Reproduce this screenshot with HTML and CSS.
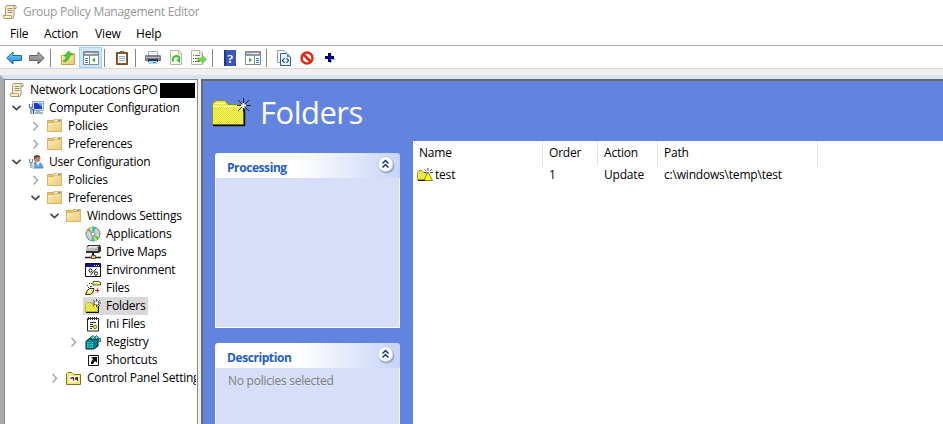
FILE: index.html
```html
<!DOCTYPE html>
<html lang="en">
<head>
<meta charset="utf-8">
<title>Group Policy Management Editor</title>
<link rel="stylesheet" href="styles.css">
</head>
<body>
<svg class="defs" width="0" height="0" aria-hidden="true">
<defs>
<linearGradient id="gf" x1="0" y1="0" x2="1" y2="1"><stop offset="0" stop-color="#ffedb5"/><stop offset="1" stop-color="#ecc873"/></linearGradient>
<linearGradient id="gb" x1="0" y1="0" x2="0" y2="1"><stop offset="0" stop-color="#79d0ff"/><stop offset="1" stop-color="#158ae0"/></linearGradient>
<linearGradient id="gg" x1="0" y1="0" x2="0" y2="1"><stop offset="0" stop-color="#bbb"/><stop offset="1" stop-color="#777"/></linearGradient>
<pattern id="dither" width="2" height="2" patternUnits="userSpaceOnUse"><rect width="2" height="2" fill="#ffff2e"/><rect width="1" height="1" fill="#d6d66c"/><rect x="1" y="1" width="1" height="1" fill="#d6d66c"/></pattern>
<symbol id="scroll" viewBox="0 0 16 16"><path d="M4.500 1.500H13Q15 2 14 4.500H12V12Q12 14.500 10 14.500H2Q.5 13.500 1.500 11.500H3.500V3.500Q3.500 2 4.500 1.500Z" fill="#f7efcf" stroke="#a49467"/><path d="M12 4.500V2M3.500 11.500H9.500V14" fill="none" stroke="#b9a878"/><path d="M5.500 4.500h5M5.500 6.500h5M5.500 8.500h5" stroke="#998e6e"/></symbol>
<symbol id="folder" viewBox="0 0 16 16"><path d="M.5 2.500H6L7.500 1.500H14.500V13.500H.5Z" fill="#e7c16b" stroke="#d3ab55"/><path d="M8 2.500h5" stroke="#fff" stroke-width="1.500"/><path d="M11 2.500h2" stroke="#2c91d8"/><path d="M.5 4.500H7L8 3.500H14.500V13.500H.5Z" fill="url(#gf)" stroke="#dcb661"/></symbol>
<symbol id="computer" viewBox="0 0 16 16"><path d="M4.500 1.500H15.500V10.500H4.500Z" fill="#dce5ef" stroke="#9ba8b8"/><path d="M6 3H14V9H6Z" fill="#1739cf"/><path d="M9 3H14V7Z" fill="#69a8ff"/><path d="M8 11h4v1h3v2H7v-2h1Z" fill="#a6b3c0"/><path d="M1.500 4V7L3 8.500V14M4.500 4V7L3 8.500" fill="none" stroke="#607e92" stroke-width="1.300"/><path d="M5.500 9v5" stroke="#2864ae" stroke-width="1.500"/></symbol>
<symbol id="user" viewBox="0 0 16 16"><path d="M5 14V11Q6 8 9 8H11Q14 9 15 14Z" fill="#62a4dd" stroke="#4d87bd"/><path d="M8 8L10 12L12 8Z" fill="#fff"/><circle cx="9" cy="4.800" r="3.300" fill="#bc8862"/><path d="M6 5Q5 1 9 1Q12 1 12.500 4L10 3Z" fill="#5a4a40"/><path d="M1.500 5V8L3 9V14M4.500 5V8L3 9" fill="none" stroke="#718999" stroke-width="1.200"/><path d="M5.500 10v4" stroke="#d4e3ee" stroke-width="1.500"/></symbol>
<symbol id="disc" viewBox="0 0 16 16"><circle cx="8" cy="8" r="7" fill="#d0d0d0" stroke="#777"/><path d="M8 8L2 4Q4 1 7 1Z" fill="#9a9a9a"/><path d="M8 8L4 2 7 1Z" fill="#f5ec39"/><path d="M8 8L7 1Q10 1 11 2Z" fill="#18c9d8"/><path d="M8 8L14 12Q12 15 9 15Z" fill="#45d02d"/><path d="M8 8L9 15H6Z" fill="#12c9e8"/><path d="M8 8L12 14 10 15Z" fill="#f0e930"/><circle cx="8" cy="8" r="2" fill="#fff" stroke="#888"/></symbol>
<symbol id="drive" viewBox="0 0 16 16"><path d="M3 1H15L16 3V7L14 9H1V4Z" fill="#333"/><path d="M4 2H14L12 4H1Z" fill="#e4e4e4"/><path d="M1 4H13V7H1Z" fill="#bebebe"/><path d="M10 5h2v1h-2Z" fill="#27d52d"/><path d="M8 9V12" stroke="#222" stroke-width="2"/><path d="M0 13.500H16" stroke="#222" stroke-width="1.500"/><path d="M6.500 11.500h4v3h-4Z" fill="#e8d542" stroke="#555"/></symbol>
<symbol id="env" viewBox="0 0 16 16"><path d="M.5 1.500H15.500V14.500H.5Z" fill="#fff" stroke="#111"/><path d="M1 2H15V5H1Z" fill="#101096"/><path d="M9 3.500h1M11 3.500h1M13 3.500h1" stroke="#fff"/><path d="M5.500 13L11.500 6.500" stroke="#111"/><ellipse cx="5.500" cy="8.500" rx="1.500" ry="1.700" fill="none" stroke="#111"/><ellipse cx="11" cy="11.500" rx="1.500" ry="1.700" fill="none" stroke="#111"/></symbol>
<symbol id="files" viewBox="0 0 16 16"><path d="M8 1.500h6l1.500 1V5H8Z" fill="url(#dither)" stroke="#222" stroke-width=".7"/><path d="M9 2.500h4" stroke="#fff"/><path d="M4 3.500h1M6 3.500h1M2.500 5v1M3 7.500h1M5 6.500h2M7 8.500h1" stroke="#333"/><path d="M4.500 8.500H9L8 12.500 5.500 14.500H.5L2 11Z" fill="url(#dither)" stroke="#333"/><path d="M4 9.500h3M3 11.500h4" stroke="#fff"/><path d="M10 10.500h4M12.500 8.500v4" stroke="#e01919" stroke-width="1.200"/></symbol>
<symbol id="yfolder" viewBox="0 0 16 16"><path d="M.5 6.500L2 4.500H6L7.500 6.500H12.500V13.500H.5Z" fill="url(#dither)" stroke="#b5b51b"/><path d="M1 14.500H13.500V8" fill="none" stroke="#111"/><path d="M11.500 1v2.500M11.500 7v2M7.500 5h2.500M13 5h3M8 2l2 2M13 6l2 2M15 2l-2 2M10 6L8 8" fill="none" stroke="#222" stroke-width=".8"/><path d="M11 4h1v2h-1ZM10 5h3v1h-3Z" fill="#fff"/></symbol>
<symbol id="ini" viewBox="0 0 16 16"><path d="M2.500 2.500H13.500V15H2.500Z" fill="#fff" stroke="#222"/><path d="M3.500 1v3M5.500 1v3M7.500 1v3M9.500 1v3M11.500 1v3" stroke="#333"/><path d="M5 6.500h6M5 8.500h3M5 10.500h3M5 12.500h2" stroke="#333"/><circle cx="10" cy="11" r="1.800" fill="#ffed25" stroke="#777005"/></symbol>
<symbol id="registry" viewBox="0 0 16 16"><path d="M1 7.500L4 4.500 10 5.500 13 4V12L9 15H1Z" fill="#087d89" stroke="#022"/><path d="M2 8h6v6H2Z" fill="#23d9dd"/><path d="M4 7v7M6 7v7M1 9.500h8M1 12h8" stroke="#087d89" stroke-width=".8"/><path d="M5 3.500l3-2 2 2-2 2ZM11.500 1.500l2 2-2 2-2-2ZM13.500 4.500h2v3h-2Z" fill="#48d9e2" stroke="#033" stroke-width=".7"/></symbol>
<symbol id="shortcut" viewBox="0 0 16 16"><path d="M3.500 3.500H13.500V13.500H3.500Z" fill="#fff" stroke="#111"/><path d="M6 5h6v6L10 9 8 12H6V10L8 7Z" fill="#111"/></symbol>
<symbol id="control" viewBox="0 0 16 16"><path d="M.5 4L2 2.500H6L8 4.500H14.500V14.500H.5Z" fill="#f9e975" stroke="#7d711a"/><path d="M3 6H13V12H3Z" fill="#fff"/><path d="M4 8.500l3-1 1 3" stroke="#222" stroke-width="1.300" fill="none"/><path d="M9 7h3v3H9Z" fill="#c02e29"/><path d="M11.500 7v4" stroke="#222"/></symbol>
<symbol id="larrow" viewBox="0 0 16 16"><path d="M.7 8L7 2V5.500H15.500V10.500H7V14Z" fill="url(#gb)" stroke="#1769a4"/></symbol>
<symbol id="rarrow" viewBox="0 0 16 16"><path d="M15.300 8L9 2V5.500H.5V10.500H9V14Z" fill="url(#gg)" stroke="#666"/></symbol>
<symbol id="up" viewBox="0 0 16 16"><path d="M1.500 5.500H8L9.500 3.500H14.500V14.500H1.500Z" fill="url(#gf)" stroke="#c9a24c"/><path d="M3 11Q6 10 6.500 6H4L8.500 1L13 5H10Q9 11 4 12Z" fill="#46cd35" stroke="#319025" stroke-width=".6"/></symbol>
<symbol id="pane" viewBox="0 0 16 16"><path d="M.5 1.500H15.500V14.500H.5Z" fill="#fff" stroke="#818995"/><path d="M1 2H15V6H1Z" fill="#8f98a3"/><path d="M2 3.500h9M12 3.500h2" stroke="#eee"/><path d="M6.500 6v8" stroke="#818995"/><path d="M2 8.500h3M2 10.500h3M2 12.500h3" stroke="#287ad1"/><path d="M12 7.500v5L9 10Z" fill="#38b72b"/></symbol>
<symbol id="clip" viewBox="0 0 16 16"><path d="M2.500 2.500H13.500V14.500H2.500Z" fill="#9b5729" stroke="#7e4524"/><path d="M4 4H12V13H4Z" fill="#fff"/><path d="M5 6.500h6M5 8.500h6M5 10.500h6" stroke="#8caac5"/><path d="M6 1h4v3H6Z" fill="#666"/></symbol>
<symbol id="printer" viewBox="0 0 16 16"><path d="M3.500 1.500H12.500V6H3.500Z" fill="#eef7ff" stroke="#a3aeba"/><path d="M1 5H15Q16 5 16 7V11H0V7Q0 5 1 5Z" fill="#7b8087"/><path d="M1 7.500h14" stroke="#b7bdc4"/><path d="M3 9H13V12H3Z" fill="#303844"/><path d="M4 11H12V14H4Z" fill="#a7dcf5"/><path d="M8 12.500h3" stroke="#287fc3"/></symbol>
<symbol id="page" viewBox="0 0 16 16"><path d="M2.500 .5H11L13.500 3V14.500H2.500Z" fill="#fffdef" stroke="#b8b4a8"/><path d="M10.500 1v3h3" fill="none" stroke="#bbb"/></symbol>
<symbol id="refresh" viewBox="0 0 16 16"><use href="#page" width="16" height="16"/><path d="M5.500 11.500Q3.500 7 8 6Q12.500 6 11 10" fill="none" stroke="#36bd38" stroke-width="2"/><path d="M8 10l4-1v4Z" fill="#2db530"/></symbol>
<symbol id="export" viewBox="0 0 16 16"><use href="#page" x="-2" width="16" height="16"/><path d="M2 5.500h1M4 5.500h5M2 8.500h1M4 8.500h3M2 11.500h1M4 11.500h5" stroke="#777b70"/><path d="M7 8h4V5l4.500 4.500-4.500 4V11H7Z" fill="#7bdc50" stroke="#42a22c" stroke-width=".6"/></symbol>
<symbol id="help" viewBox="0 0 16 16"><path d="M2 0H14V16H2Z" fill="#3857bd"/><path d="M2 0H4V16H2Z" fill="#203a87"/><text x="5" y="13" class="help-mark">?</text></symbol>
<symbol id="code" viewBox="0 0 16 16"><path d="M1.500 .5H8L10 2.500V12.500H1.500Z" fill="#fff" stroke="#8c9cad"/><path d="M4.500 3.500H11L14.500 7V15.500H4.500Z" fill="#eaf3ff" stroke="#315ca0"/><path d="M11 4v3h3Z" fill="#547fbe"/><path d="M8.500 8L6.500 10.500 8.500 13M10.500 8l2 2.500-2 2.500" fill="none" stroke="#18489b" stroke-width="1.200"/></symbol>
<symbol id="deny" viewBox="0 0 16 16"><circle cx="8" cy="8" r="5.500" fill="#fff" stroke="#e02b1c" stroke-width="2.500"/><path d="M4 4l8 8" stroke="#e02b1c" stroke-width="2.800"/></symbol>
<symbol id="plus" viewBox="0 0 16 16"><path d="M7 5h3v3h3v2h-3v3H7" fill="#bbb"/><path d="M6 3h3v3h3v3H9v3H6V9H3V6h3Z" fill="#000080"/></symbol>
<symbol id="down" viewBox="0 0 10 10"><path d="M1.500 2.800L5.500 6.500L9.500 2.800" fill="none" stroke="#444" stroke-width="1.700"/></symbol>
<symbol id="right" viewBox="0 0 10 10"><path d="M3.500 1L7.500 5.300L3.500 9.500" fill="none" stroke="#a5a5a5" stroke-width="1.500"/></symbol>
<symbol id="collapse" viewBox="0 0 20 20"><circle cx="10.500" cy="10.500" r="8" fill="#9aa8cf"/><circle cx="9.500" cy="9" r="7.500" fill="#fff" stroke="#c3cbe3"/><path d="M6.500 8.500L9.500 5.500L12.500 8.500M6.500 12.500L9.500 9.500L12.500 12.500" fill="none" stroke="#10358c" stroke-width="1.500"/></symbol>
<symbol id="testicon" viewBox="0 0 16 16"><path d="M.5 5.500L2 3.500H5L6.500 5.500H10V12.500H.5Z" fill="url(#dither)" stroke="#a5a516"/><path d="M1 13.500H9" stroke="#111"/><path d="M11 5L7 13.500H15.500Z" fill="#ff0" stroke="#554f00" stroke-width=".7"/><path d="M11 1v3M7.500 2.500l2 1.500M15 2l-2 2M13 5.500h3M7 5.500h2" stroke="#222" stroke-width=".8"/></symbol>
</defs>
</svg>
<div class="window">
<header class="title"><svg class="i"><use href="#scroll"/></svg><span class="t-title">Group Policy Management Editor</span></header>
<nav class="menu"><span class="m-file">File</span><span class="m-action">Action</span><span class="m-view">View</span><span>Help</span></nav>
<div class="toolbar">
<span class="tool"><svg class="i"><use href="#larrow"/></svg></span><span class="tool"><svg class="i"><use href="#rarrow"/></svg></span><i class="sep"></i>
<span class="tool"><svg class="i"><use href="#up"/></svg></span><span class="tool active"><svg class="i"><use href="#pane"/></svg></span><i class="sep"></i>
<span class="tool"><svg class="i"><use href="#clip"/></svg></span><i class="sep"></i>
<span class="tool"><svg class="i"><use href="#printer"/></svg></span><span class="tool"><svg class="i"><use href="#refresh"/></svg></span><span class="tool"><svg class="i"><use href="#export"/></svg></span><i class="sep"></i>
<span class="tool"><svg class="i"><use href="#help"/></svg></span><span class="tool"><svg class="i flip"><use href="#pane"/></svg></span><i class="sep"></i>
<span class="tool"><svg class="i"><use href="#code"/></svg></span><span class="tool"><svg class="i"><use href="#deny"/></svg></span><span class="tool"><svg class="i"><use href="#plus"/></svg></span>
</div>
<div class="gap"></div>
<div class="work">
<aside class="tree">
<div class="row root"><svg class="i"><use href="#scroll"/></svg><span class="label">Network Locations GPO</span><b class="redacted"></b></div>
<div class="row l1"><svg class="chev"><use href="#down"/></svg><svg class="i"><use href="#computer"/></svg><span class="label">Computer Configuration</span></div>
<div class="row l2"><svg class="chev"><use href="#right"/></svg><svg class="i"><use href="#folder"/></svg><span class="label">Policies</span></div>
<div class="row l2"><svg class="chev"><use href="#right"/></svg><svg class="i"><use href="#folder"/></svg><span class="label">Preferences</span></div>
<div class="row l1"><svg class="chev"><use href="#down"/></svg><svg class="i"><use href="#user"/></svg><span class="label">User Configuration</span></div>
<div class="row l2"><svg class="chev"><use href="#right"/></svg><svg class="i"><use href="#folder"/></svg><span class="label">Policies</span></div>
<div class="row l2"><svg class="chev"><use href="#down"/></svg><svg class="i"><use href="#folder"/></svg><span class="label">Preferences</span></div>
<div class="row l3"><svg class="chev"><use href="#down"/></svg><svg class="i"><use href="#folder"/></svg><span class="label">Windows Settings</span></div>
<div class="row l4"><i class="chev"></i><svg class="i"><use href="#disc"/></svg><span class="label">Applications</span></div>
<div class="row l4"><i class="chev"></i><svg class="i"><use href="#drive"/></svg><span class="label">Drive Maps</span></div>
<div class="row l4"><i class="chev"></i><svg class="i"><use href="#env"/></svg><span class="label">Environment</span></div>
<div class="row l4"><i class="chev"></i><svg class="i"><use href="#files"/></svg><span class="label">Files</span></div>
<div class="row l4"><i class="chev"></i><span class="selected"><svg class="i"><use href="#yfolder"/></svg><span class="label">Folders</span></span></div>
<div class="row l4"><i class="chev"></i><svg class="i"><use href="#ini"/></svg><span class="label">Ini Files</span></div>
<div class="row l4"><svg class="chev"><use href="#right"/></svg><svg class="i"><use href="#registry"/></svg><span class="label">Registry</span></div>
<div class="row l4"><i class="chev"></i><svg class="i"><use href="#shortcut"/></svg><span class="label">Shortcuts</span></div>
<div class="row l3"><svg class="chev"><use href="#right"/></svg><svg class="i"><use href="#control"/></svg><span class="label">Control Panel Settings</span></div>
</aside>
<main class="content">
<div class="banner"><svg class="big" viewBox="0 0 40 30"><path d="M1.500 6.500L5 3.500H14L17 7.500H32.500V27.500H1.500Z" fill="url(#dither)" stroke="#8d8c1c"/><path d="M2 9.500H31M3 6.500H14" stroke="#ffffb8"/><path d="M2 28.500H33.500V12" fill="none" stroke="#111" stroke-width="1.500"/><path d="M32.500 1v5M32.500 11v4M26 8.500h4M35 8.500h5M27 3l4 4M34 10l4 4M38 3l-4 4M31 10l-4 4" stroke="#222"/><path d="M32.500 6v5M30 8.500h5" stroke="#fff" stroke-width="1.500"/></svg><h1>Folders</h1></div>
<div class="body">
<div class="panels">
<section class="panel"><h2><span>Processing</span><svg class="collapse"><use href="#collapse"/></svg></h2><div class="pbody"></div></section>
<section class="panel"><h2><span>Description</span><svg class="collapse"><use href="#collapse"/></svg></h2><div class="pbody"><p>No policies selected</p></div></section>
</div>
<div class="list">
<div class="grid head"><span>Name</span><span>Order</span><span>Action</span><span>Path</span></div>
<div class="grid item"><span><svg class="i"><use href="#testicon"/></svg>test</span><span>1</span><span>Update</span><span class="path">c:\windows\temp\test</span></div>
</div>
</div>
</main>
</div>
</div>
</body>
</html>
```
FILE: styles.css
```css
* { box-sizing: border-box; }
html, body { height: 424px; }
body { margin: 0; font: 12px/18px "Open Sans", "Noto Sans", sans-serif; letter-spacing: -0.2px; color: #000; overflow: hidden; }
.defs { position: absolute; }
.window { display: flex; flex-direction: column; width: 943px; height: 424px; background: #fff; overflow: hidden; }
.i { width: 16px; height: 16px; flex: none; display: block; }
.title { height: 24px; flex: none; display: flex; align-items: center; padding-left: 2px; gap: 5px; color: #969696; letter-spacing: -0.28px; }
.menu { height: 22px; flex: none; border-bottom: 1px solid #aaa9ad; display: flex; align-items: center; padding: 0 0 1px 10px; letter-spacing: -0.15px; }
.m-file { width: 34px; }
.m-action { width: 51px; }
.m-view { width: 41px; }
.toolbar { height: 23px; flex: none; display: flex; align-items: center; padding: 1px 0 0 2px; border-bottom: 1px solid #d9d9d9; }
.tool { width: 23px; height: 21px; display: flex; align-items: center; justify-content: center; }
.active { background: #cce8ff; border: 1px solid #99d1ff; }
.sep { width: 1px; height: 18px; margin: 0 5px 0 2px; background: #858585; }
.flip { transform: scaleX(-1); }
.gap { height: 6px; flex: none; background: #f0f0f0; }
.work { flex: 1; min-height: 0; display: flex; background: #f0f0f0; border-left: 4px solid #ababab; border-top: 4px solid #d6e3f1; }
.tree { width: 194px; flex: none; border: 1px solid #828790; border-bottom: 0; background: #fff; padding: 1px 1px 0 0; overflow: hidden; }
.row { height: 18px; display: flex; align-items: center; white-space: nowrap; overflow: hidden; }
.row .label { height: 18px; line-height: 17px; padding: 0 3px 0 5px; letter-spacing: -0.25px; }
.chev { width: 10px; height: 10px; margin-right: 7px; flex: none; }
.root { padding-left: 4px; }
.redacted { width: 35px; height: 15px; margin-left: -1px; background: #000; flex: none; }
.l1 { padding-left: 6px; }
.l2 { padding-left: 25px; }
.l3 { padding-left: 44px; }
.l4 { padding-left: 63px; }
.selected { display: flex; align-items: center; height: 18px; background: #d9d9d9; padding-left: 2px; margin-left: -2px; }
.content { margin-left: 3px; flex: 1; min-width: 0; background: #6284df; border: 2px solid #696969; border-right: 0; border-bottom: 0; display: flex; flex-direction: column; overflow: hidden; }
.banner { height: 60px; flex: none; display: flex; align-items: center; padding: 2px 0 0 8px; }
.big { width: 40px; height: 30px; }
h1 { margin: 0 0 0 9px; font-size: 31px; line-height: 40px; font-weight: 400; color: #fff; letter-spacing: -0.5px; }
.body { flex: 1; min-height: 0; display: flex; overflow: hidden; }
.panels { width: 210px; flex: none; padding: 12px 13px 0 12px; display: flex; flex-direction: column; gap: 15px; }
.panel { height: 175px; flex: none; display: flex; flex-direction: column; }
h2 { margin: 0; height: 25px; flex: none; display: flex; justify-content: space-between; padding: 2px 4px 0 12px; border-radius: 3px 3px 0 0; background: linear-gradient(90deg, #fff 45%, #c7d4f7); color: #215dc6; font-size: 12px; font-weight: 700; line-height: 25px; letter-spacing: -0.42px; }
.collapse { width: 20px; height: 20px; }
.pbody { flex: 1; background: #d6dff7; border: 1px solid #fff; border-top: 0; }
p { margin: 0; padding: 4px 12px; color: #808080; letter-spacing: -0.28px; }
.panel p { letter-spacing: -0.25px; }
.list { flex: 1; background: #fff; }
.grid { display: grid; grid-template-columns: 130px 55px 60px 160px; }
.grid > span { padding-left: 6px; display: flex; align-items: center; }
.head { height: 25px; }
.head > span { border-right: 1px solid #e5e5e5; padding-bottom: 1px; }
.item { height: 18px; }
.item > span:first-child { padding-left: 4px; gap: 2px; }
.help-mark { font: bold 13px "Liberation Serif", serif; fill: #fff; letter-spacing: 0; }
```
